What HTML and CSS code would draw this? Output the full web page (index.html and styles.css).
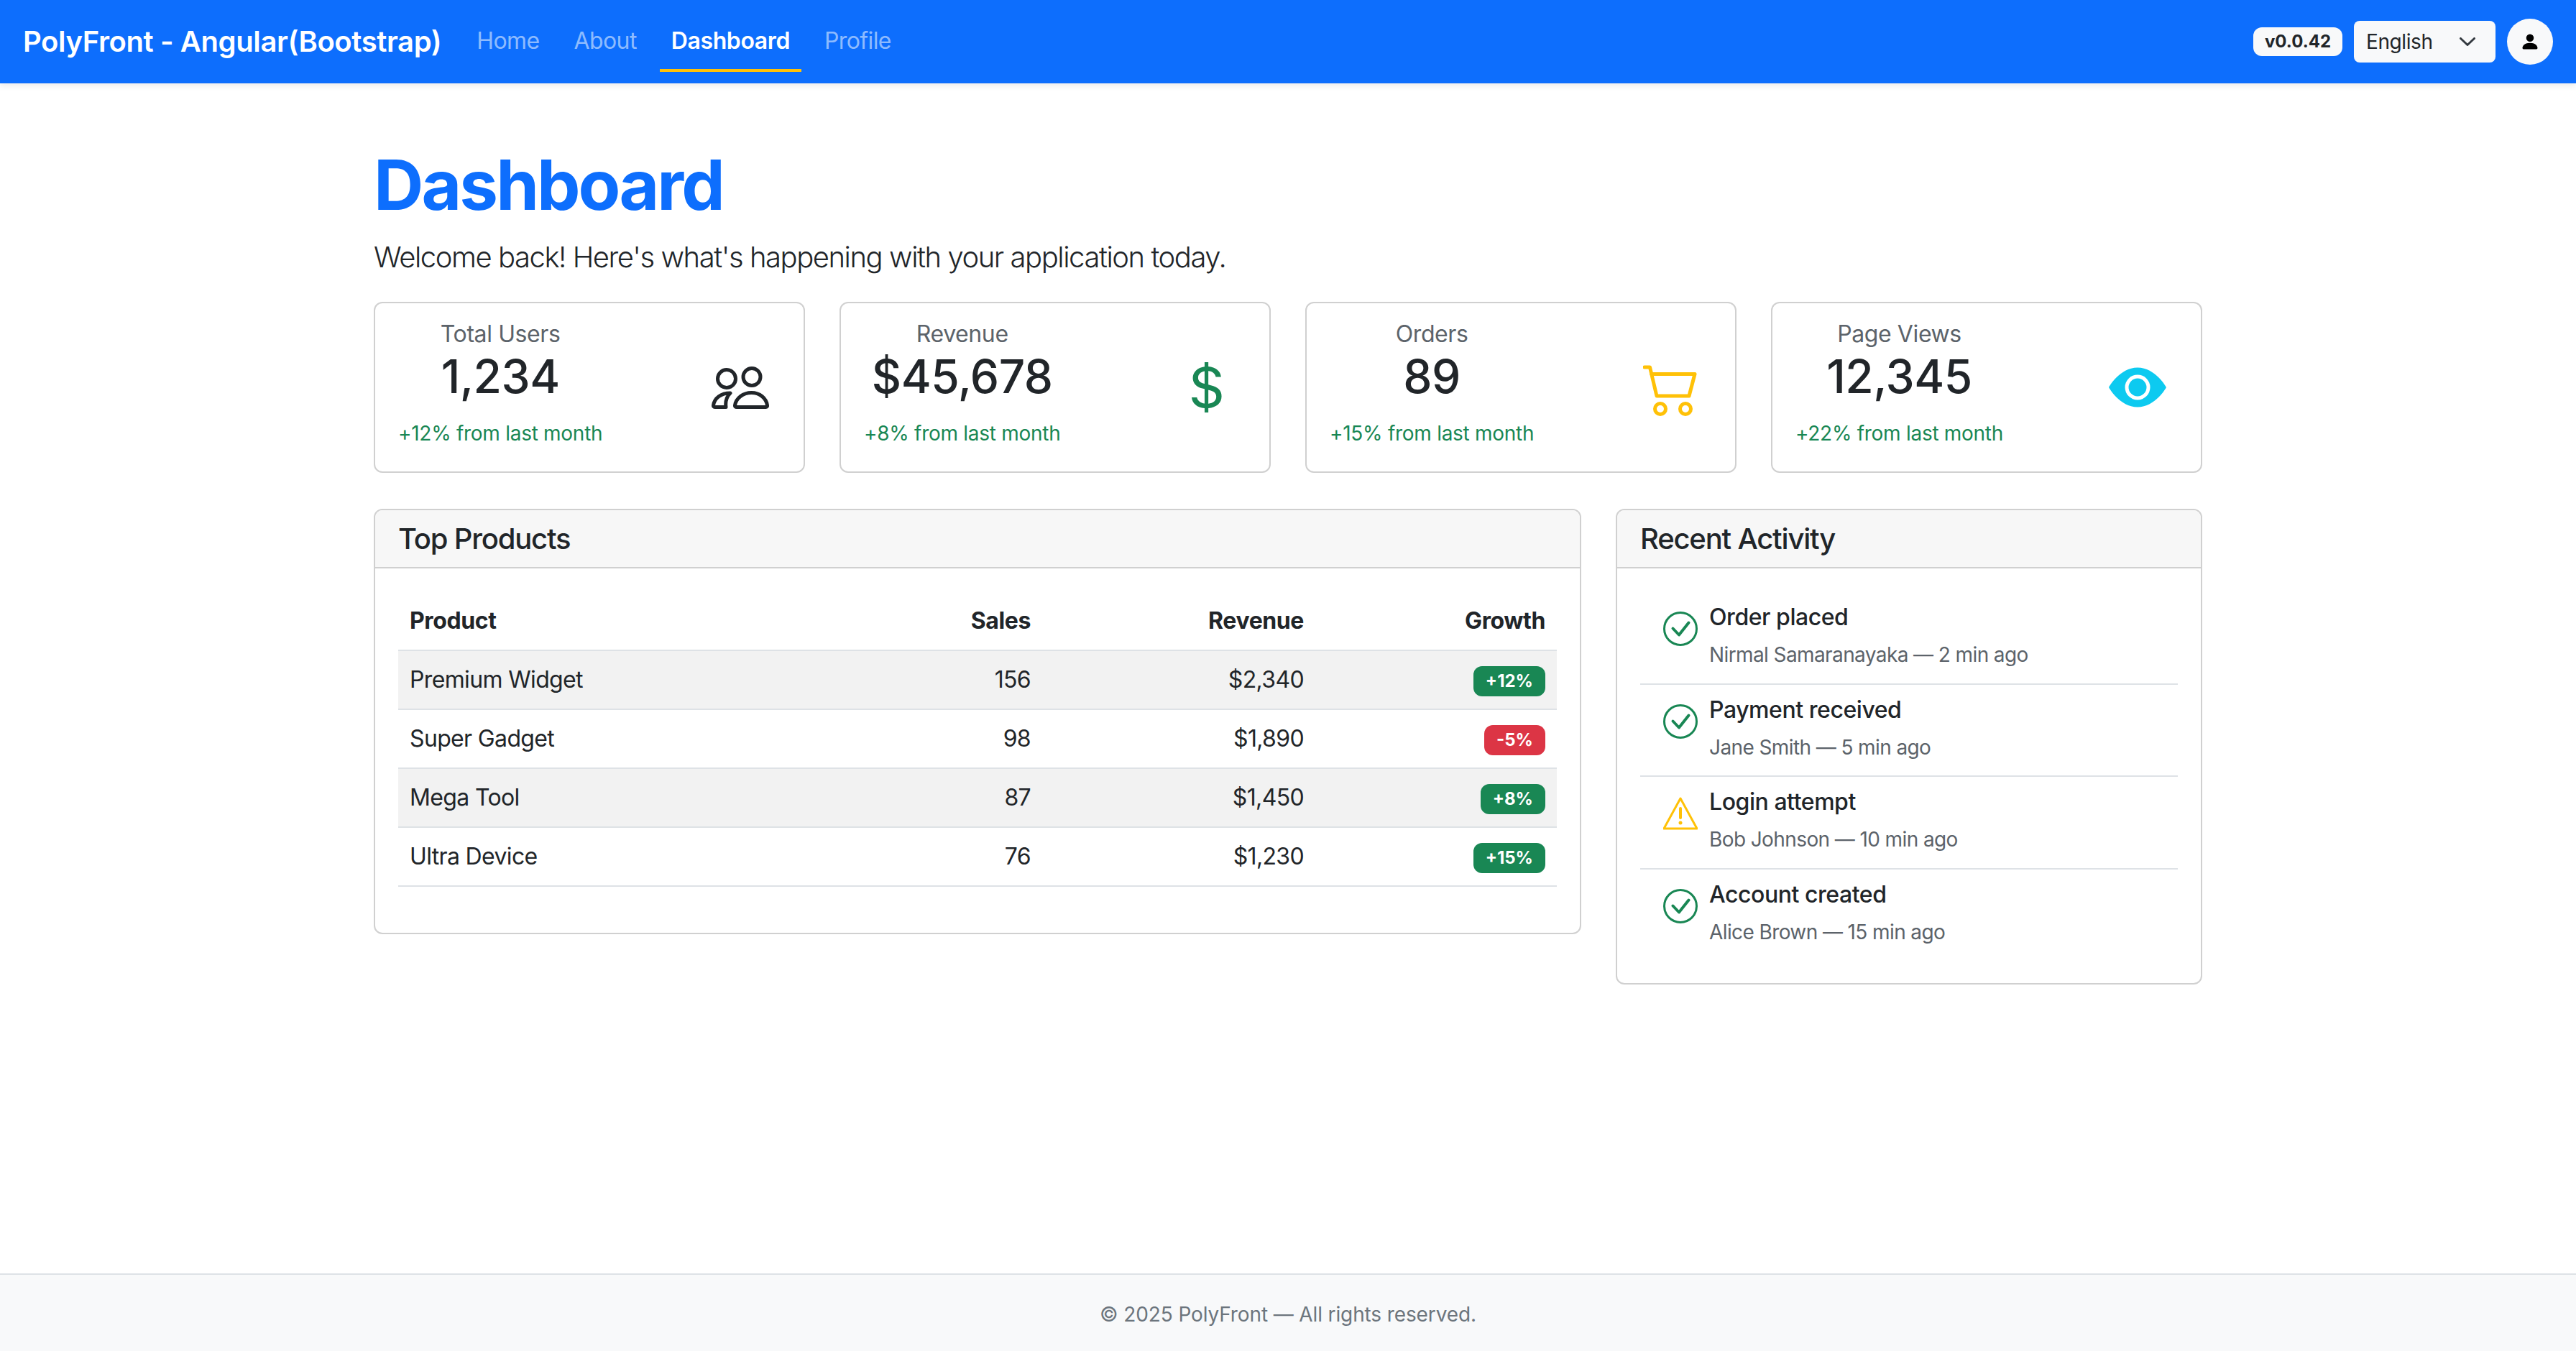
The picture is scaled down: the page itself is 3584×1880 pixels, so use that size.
FILE: index.html

```html
<!DOCTYPE html>
<html lang="en">

<head>
    <meta charset="UTF-8">
    <meta name="viewport" content="width=device-width, initial-scale=1.0">
    <title>PolyFront - Angular(Bootstrap)</title>
    <link rel="stylesheet" href="styles.css">
</head>

<body>
    <nav class="navbar">
        <a class="brand">PolyFront - Angular(Bootstrap)</a>
        <ul class="nav-links">
            <li><a class="nav-link">Home</a></li>
            <li><a class="nav-link">About</a></li>
            <li><a class="nav-link active">Dashboard</a></li>
            <li><a class="nav-link">Profile</a></li>
        </ul>
        <div class="nav-right">
            <span class="version">v0.0.42</span>
            <div class="lang-select">
                <span>English</span>
                <svg class="chevron" viewBox="0 0 22 12"><path d="M1.5 1.5 11 10.5l9.500-9" /></svg>
            </div>
            <div class="avatar">
                <svg viewBox="0 0 16 16"><path d="M3 14s-1 0-1-1 1-4 6-4 6 3 6 4-1 1-1 1H3zm5-6a3 3 0 1 0 0-6 3 3 0 0 0 0 6z" /></svg>
            </div>
        </div>
    </nav>

    <main class="content">
        <h1 class="page-title">Dashboard</h1>
        <p class="lead">Welcome back! Here's what's happening with your application today.</p>

        <section class="stats">
            <div class="stat-card">
                <div class="stat-text">
                    <h6>Total Users</h6>
                    <h2>1,234</h2>
                    <small>+12% from last month</small>
                </div>
                <svg class="stat-icon icon-users" viewBox="0 0 80 80">
                    <circle cx="21" cy="28" r="12.500" />
                    <circle cx="56" cy="25.500" r="12" />
                    <path d="M35 67.500h40.500c1.500 0 2.200-1 2-2.500C76 55 67 47.500 55.500 47.500S34 55 32.500 65c-.2 1.500.5 2.500 2.500 2.500z" />
                    <path d="M26 48C13 48 4 55 2.500 65c-.2 1.500.5 2.500 2 2.500H20C19 60 21 53 26 48z" />
                </svg>
            </div>
            <div class="stat-card">
                <div class="stat-text">
                    <h6>Revenue</h6>
                    <h2>$45,678</h2>
                    <small>+8% from last month</small>
                </div>
                <svg class="stat-icon icon-dollar" viewBox="0 0 16 16">
                    <path d="M4 10.781c.148 1.667 1.513 2.85 3.591 3.003V15h1.043v-1.216c2.27-.179 3.678-1.438 3.678-3.3 0-1.59-.947-2.51-2.956-3.028l-.722-.187V3.467c1.122.11 1.879.714 2.07 1.616h1.47c-.166-1.6-1.54-2.748-3.54-2.875V1H7.591v1.233c-1.939.23-3.27 1.472-3.27 3.156 0 1.454.966 2.483 2.661 2.917l.61.162v4.031c-1.149-.17-1.94-.8-2.131-1.718H4zm3.391-3.836c-1.043-.263-1.6-.825-1.6-1.616 0-.944.704-1.641 1.8-1.828v3.495l-.2-.05zm1.591 1.872c1.287.323 1.852.859 1.852 1.769 0 1.097-.826 1.828-2.2 1.939V8.73l.348.086z" />
                </svg>
            </div>
            <div class="stat-card">
                <div class="stat-text">
                    <h6>Orders</h6>
                    <h2>89</h2>
                    <small>+15% from last month</small>
                </div>
                <svg class="stat-icon icon-cart" viewBox="0 0 80 80">
                    <path d="M2 12h7.500L19 52h45l8-30.500H11.500" />
                    <circle cx="24" cy="70" r="7.500" />
                    <circle cx="59" cy="70" r="7.500" />
                </svg>
            </div>
            <div class="stat-card">
                <div class="stat-text">
                    <h6>Page Views</h6>
                    <h2>12,345</h2>
                    <small>+22% from last month</small>
                </div>
                <svg class="stat-icon icon-eye" viewBox="0 0 16 16">
                    <path d="M10.500 8a2.500 2.500 0 1 1-5 0 2.500 2.500 0 0 1 5 0z" />
                    <path d="M0 8s3-5.500 8-5.500S16 8 16 8s-3 5.500-8 5.500S0 8 0 8zm8 3.500a3.500 3.500 0 1 0 0-7 3.500 3.500 0 0 0 0 7z" />
                </svg>
            </div>
        </section>

        <section class="panels">
            <div class="card">
                <h5 class="card-header">Top Products</h5>
                <div class="card-body">
                    <table class="products">
                        <thead>
                            <tr>
                                <th class="col-product">Product</th>
                                <th class="col-sales">Sales</th>
                                <th class="col-revenue">Revenue</th>
                                <th class="col-growth">Growth</th>
                            </tr>
                        </thead>
                        <tbody>
                            <tr>
                                <td>Premium Widget</td>
                                <td>156</td>
                                <td>$2,340</td>
                                <td><span class="badge up">+12%</span></td>
                            </tr>
                            <tr>
                                <td>Super Gadget</td>
                                <td>98</td>
                                <td>$1,890</td>
                                <td><span class="badge down">-5%</span></td>
                            </tr>
                            <tr>
                                <td>Mega Tool</td>
                                <td>87</td>
                                <td>$1,450</td>
                                <td><span class="badge up">+8%</span></td>
                            </tr>
                            <tr>
                                <td>Ultra Device</td>
                                <td>76</td>
                                <td>$1,230</td>
                                <td><span class="badge up">+15%</span></td>
                            </tr>
                        </tbody>
                    </table>
                </div>
            </div>

            <div class="card">
                <h5 class="card-header">Recent Activity</h5>
                <div class="card-body activity-body">
                    <ul class="activity">
                        <li>
                            <svg class="activity-icon ok" viewBox="0 0 48 48"><circle cx="24" cy="24" r="22.500" /><path d="M13.500 23.500 22 32.500 35.500 15.500" /></svg>
                            <div>
                                <div class="activity-title">Order placed</div>
                                <small>Nirmal Samaranayaka — 2 min ago</small>
                            </div>
                        </li>
                        <li>
                            <svg class="activity-icon ok" viewBox="0 0 48 48"><circle cx="24" cy="24" r="22.500" /><path d="M13.500 23.500 22 32.500 35.500 15.500" /></svg>
                            <div>
                                <div class="activity-title">Payment received</div>
                                <small>Jane Smith — 5 min ago</small>
                            </div>
                        </li>
                        <li>
                            <svg class="activity-icon warn" viewBox="0 0 48 48"><path d="M24 3 47 45H1z" /><path class="bang" d="M24 17v13" /><circle class="dot" cx="24" cy="37" r="2.500" /></svg>
                            <div>
                                <div class="activity-title">Login attempt</div>
                                <small>Bob Johnson — 10 min ago</small>
                            </div>
                        </li>
                        <li>
                            <svg class="activity-icon ok" viewBox="0 0 48 48"><circle cx="24" cy="24" r="22.500" /><path d="M13.500 23.500 22 32.500 35.500 15.500" /></svg>
                            <div>
                                <div class="activity-title">Account created</div>
                                <small>Alice Brown — 15 min ago</small>
                            </div>
                        </li>
                    </ul>
                </div>
            </div>
        </section>
    </main>

    <footer class="footer">© 2025 PolyFront — All rights reserved.</footer>
</body>

</html>
```

FILE: styles.css

```css
* {
    margin: 0;
    padding: 0;
    box-sizing: border-box;
}

html,
body {
    height: 100%;
}

body {
    display: flex;
    flex-direction: column;
    min-height: 100vh;
    background: #fff;
    color: #212529;
    font-family: Inter, "Liberation Sans", sans-serif;
    font-size: 32px;
    line-height: 48px;
}

ul {
    list-style: none;
}

/* navbar */
.navbar {
    display: flex;
    align-items: center;
    height: 116px;
    padding: 0 32px;
    background: #0d6efd;
    box-shadow: 0 4px 8px rgba(0, 0, 0, .075);
}

.brand {
    margin-right: 33px;
    color: #fff;
    font-size: 40px;
    font-weight: 600;
    letter-spacing: -.4px;
    line-height: 60px;
}

.nav-links {
    display: flex;
    gap: 16px;
    letter-spacing: -.6px;
}

.nav-link {
    display: block;
    padding: 17px 16px 15px;
    border-bottom: 4px solid transparent;
    color: rgba(255, 255, 255, .55);
}

.nav-link.active {
    border-bottom-color: #ffc107;
    color: #fff;
    font-weight: 600;
    letter-spacing: -.4px;
}

.nav-right {
    display: flex;
    align-items: center;
    gap: 16px;
    margin-left: auto;
}

.version {
    padding: 8px 16px;
    border-radius: 12px;
    background: #f8f9fa;
    font-size: 24px;
    font-weight: 700;
    line-height: 24px;
}

.lang-select {
    display: flex;
    align-items: center;
    justify-content: space-between;
    width: 197px;
    height: 58px;
    padding: 0 28px 0 17px;
    border-radius: 8px;
    background: #f8f9fa;
    font-size: 28px;
    letter-spacing: -.4px;
    line-height: 42px;
}

.chevron {
    width: 22px;
    height: 12px;
    fill: none;
    stroke: #343a40;
    stroke-width: 3;
    stroke-linecap: round;
    stroke-linejoin: round;
}

.avatar {
    display: flex;
    align-items: center;
    justify-content: center;
    width: 64px;
    height: 64px;
    border-radius: 50%;
    background: #f8f9fa;
}

.avatar svg {
    width: 28px;
    height: 28px;
}

/* page */
.content {
    flex: 1;
    width: 2544px;
    margin: 0 auto;
    padding-top: 83px;
}

.page-title {
    margin-bottom: 13px;
    color: #0d6efd;
    font-size: 96px;
    font-weight: 700;
    letter-spacing: -2.9px;
    line-height: 116px;
}

.lead {
    margin-bottom: 32px;
    font-size: 40px;
    font-weight: 300;
    letter-spacing: -1.45px;
    line-height: 60px;
}

/* stat cards */
.stats {
    display: grid;
    grid-template-columns: repeat(4, 1fr);
    gap: 48px;
    margin-bottom: 50px;
}

.stat-card {
    display: flex;
    align-items: center;
    justify-content: space-between;
    height: 238px;
    padding: 0 48px 0 32px;
    border: 2px solid #d0d0d0;
    border-radius: 12px;
}

.stat-text {
    padding-bottom: 6px;
    text-align: center;
}

.stat-text h6 {
    margin-bottom: 1px;
    color: #5c636a;
    font-size: 32px;
    font-weight: 400;
    letter-spacing: -.4px;
    line-height: 38px;
}

.stat-text h2 {
    margin-bottom: 17px;
    font-size: 64px;
    font-weight: 500;
    letter-spacing: -.5px;
    line-height: 77px;
}

.stat-text small {
    display: block;
    color: #198754;
    font-size: 28px;
    letter-spacing: -.28px;
    line-height: 48px;
}

.stat-icon {
    width: 80px;
    height: 80px;
}

.icon-users {
    fill: none;
    stroke: #212529;
    stroke-width: 5;
    stroke-linejoin: round;
}

.icon-dollar {
    fill: #198754;
}

.icon-cart {
    fill: none;
    stroke: #ffc107;
    stroke-width: 5;
    stroke-linecap: round;
    stroke-linejoin: round;
}

.icon-eye {
    fill: #0dcaf0;
}

/* bottom panels */
.panels {
    display: grid;
    grid-template-columns: 1680px 816px;
    gap: 48px;
    align-items: start;
}

.card {
    border: 2px solid #d0d0d0;
    border-radius: 12px;
    overflow: hidden;
}

.card-header {
    padding: 16px 32px 15px;
    border-bottom: 2px solid #d0d0d0;
    background: #f7f7f7;
    font-size: 40px;
    font-weight: 500;
    letter-spacing: -1.2px;
    line-height: 48px;
}

.card-body {
    padding: 33px 32px 32px;
}

.activity-body {
    padding-bottom: 30px;
}

.products {
    width: 100%;
    margin-bottom: 32px;
    border-collapse: collapse;
    table-layout: fixed;
    letter-spacing: -.65px;
}

.products th,
.products td {
    padding: 16px;
    border-bottom: 2px solid #dee2e6;
    text-align: right;
}

.products th:first-child,
.products td:first-child {
    text-align: left;
}

.products th {
    font-weight: 700;
    letter-spacing: -.4px;
}

.products tbody tr:nth-child(odd) {
    background: #f2f2f2;
}

.col-product {
    width: 615px;
}

.col-sales {
    width: 281px;
}

.col-revenue {
    width: 380px;
}

.badge {
    display: inline-block;
    padding: 9px 17px;
    border-radius: 12px;
    color: #fff;
    font-size: 24px;
    font-weight: 700;
    letter-spacing: 0;
    line-height: 24px;
    vertical-align: middle;
}

.badge.up {
    background: #198754;
}

.badge.down {
    background: #dc3545;
}

/* activity list */
.activity li {
    display: flex;
    align-items: flex-start;
    height: 128.5px;
    padding: 11px 32px 0;
    border-bottom: 2px solid #dee2e6;
}

.activity li:last-child {
    border-bottom: 0;
}

.activity-icon {
    flex: none;
    width: 48px;
    height: 48px;
    margin: 16px 16px 0 0;
    fill: none;
    stroke-width: 3;
    stroke-linecap: round;
    stroke-linejoin: round;
}

.activity-icon.ok {
    stroke: #198754;
}

.activity-icon.ok path {
    stroke-width: 4;
}

.activity-icon.warn {
    stroke: #ffc107;
}

.activity-icon .bang {
    stroke-width: 4;
}

.activity-icon .dot {
    fill: #ffc107;
    stroke: none;
}

.activity-title {
    font-weight: 500;
    letter-spacing: -.45px;
}

.activity small {
    display: block;
    margin-top: 4px;
    color: #5c636a;
    font-size: 28px;
    letter-spacing: -.6px;
    line-height: 48px;
}

/* footer */
.footer {
    padding: 34px 0 30px;
    border-top: 2px solid #dee2e6;
    background: #f8f9fa;
    color: #6c757d;
    font-size: 28px;
    letter-spacing: -.12px;
    line-height: 42px;
    text-align: center;
}
```
